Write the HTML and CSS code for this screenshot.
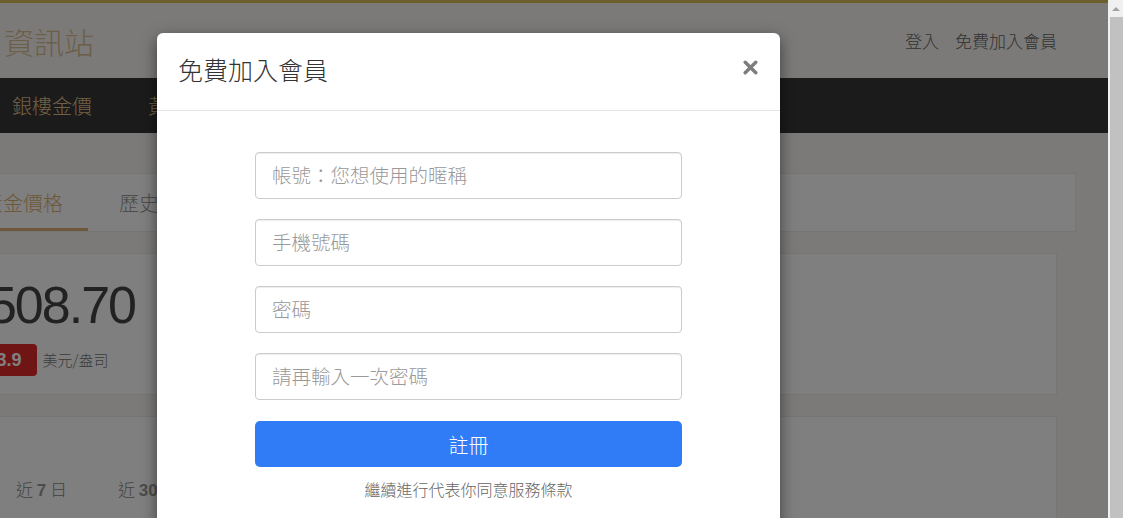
FILE: index.html
```html
<!DOCTYPE html>
<html lang="zh-Hant">
<head>
<meta charset="utf-8">
<title>資訊站</title>
<link rel="stylesheet" href="styles.css">
</head>
<body>
<div class="page">
  <div class="topbar"></div>
  <header class="header">
    <div class="logo">資訊站</div>
    <nav class="user-links">
      <a href="#">登入</a>
      <a href="#">免費加入會員</a>
    </nav>
  </header>
  <nav class="mainnav">
    <a href="#">銀樓金價</a>
    <a href="#">黃金存摺</a>
    <a href="#">國際金價</a>
    <a href="#">白銀價格</a>
    <a href="#">匯率查詢</a>
  </nav>
  <main class="main">
    <div class="tabs">
      <a class="tab active" href="#">黃金價格</a>
      <a class="tab" href="#">歷史走勢</a>
    </div>
    <section class="card price-card">
      <div class="price">1508.70</div>
      <div class="badge-row">
        <span class="badge">+13.9</span>
        <span class="unit">美元/盎司</span>
      </div>
    </section>
    <section class="card range-card">
      <div class="ranges">
        <span class="range">近 <b>7</b> 日</span>
        <span class="range">近 <b>30</b> 日</span>
        <span class="range">近 <b>90</b> 日</span>
      </div>
    </section>
  </main>

  <div class="backdrop"></div>

  <div class="modal">
    <div class="modal-header">
      <h4 class="modal-title">免費加入會員</h4>
      <button class="close" type="button" aria-label="關閉">
        <svg width="15" height="15" viewBox="0 0 15 15"><path d="M2.2 2.2 L12.8 12.8 M12.8 2.2 L2.2 12.8" stroke="#7d7d7d" stroke-width="3.4" stroke-linecap="round" fill="none"/></svg>
      </button>
    </div>
    <div class="modal-body">
      <form class="form">
        <input class="field" type="text" placeholder="帳號：您想使用的暱稱">
        <input class="field" type="text" placeholder="手機號碼">
        <input class="field" type="password" placeholder="密碼">
        <input class="field" type="password" placeholder="請再輸入一次密碼">
        <button class="submit" type="button">註冊</button>
      </form>
      <p class="terms">繼續進行代表你同意服務條款</p>
    </div>
  </div>
</div>
<div class="scrollbar">
  <div class="scroll-up"></div>
  <div class="scroll-thumb"></div>
</div>
</body>
</html>
```
FILE: styles.css
```css
html, body {
  margin: 0;
  height: 100%;
  overflow: hidden;
}
body {
  display: flex;
  font-family: "Noto Sans CJK TC", "Noto Sans", sans-serif;
  font-weight: 300;
  background: #f7f4f0;
}
a { text-decoration: none; color: inherit; }

.page {
  flex: 1;
  min-width: 0;
  position: relative;
  overflow: hidden;
  background: #f7f4f0;
}

.topbar {
  height: 3px;
  background: #d6be58;
}

.header {
  height: 75px;
  display: flex;
  align-items: center;
  justify-content: space-between;
  padding: 0 51px 0 4px;
  background: #f7f4f0;
}
.logo {
  font-size: 30px;
  line-height: 36px;
  color: #d8bd92;
  margin-top: 1px;
}
.user-links {
  display: flex;
  gap: 16px;
  font-size: 17px;
  line-height: 24px;
  color: #666;
  margin-top: 1px;
}

.mainnav {
  height: 55px;
  background: #363636;
  display: flex;
  align-items: center;
  padding-left: 12px;
  gap: 56px;
}
.mainnav a {
  font-size: 20px;
  line-height: 26px;
  color: #e2c18e;
}

.main {
  margin: 0 51px 0 -60px;
  padding-top: 40px;
}

.tabs {
  margin-right: -19px;
  height: 57px;
  border: 1px solid #eaeaea;
  background: #fff;
  display: flex;
  padding-left: 17px;
}
.tab {
  box-sizing: border-box;
  height: 57px;
  padding: 3px 25px 0;
  margin-right: 6px;
  display: flex;
  align-items: center;
  font-size: 20px;
  line-height: 26px;
  color: #999;
  border-bottom: 3px solid transparent;
}
.tab.active {
  color: #d8b070;
  border-bottom-color: #d8b070;
}

.card {
  background: #fff;
  border: 1px solid #eaeaea;
  margin-top: 21px;
}
.price-card {
  padding: 21px 0 18px 20px;
}
.price {
  font-family: "Liberation Sans", Arial, sans-serif;
  font-weight: normal;
  font-size: 52px;
  line-height: 60px;
  letter-spacing: -2px;
  color: #444;
}
.badge-row {
  display: flex;
  align-items: center;
  margin-top: 9px;
}
.badge {
  height: 32px;
  box-sizing: border-box;
  padding: 0 15px;
  display: flex;
  align-items: center;
  background: #e02b2b;
  color: #fff;
  border-radius: 4px;
  font-family: "Liberation Sans", Arial, sans-serif;
  font-weight: bold;
  font-size: 18px;
}
.unit {
  margin-left: 6px;
  font-size: 15px;
  line-height: 20px;
  color: #777;
}

.range-card {
  padding: 62px 0 40px 75px;
}
.ranges {
  display: flex;
  gap: 51px;
}
.range {
  font-size: 17px;
  line-height: 20px;
  color: #888;
}
.range b {
  font-family: "Liberation Sans", Arial, sans-serif;
  font-weight: bold;
  color: #999;
}

.backdrop {
  position: absolute;
  inset: 0;
  background: rgba(0, 0, 0, 0.5);
}

.modal {
  position: absolute;
  left: 157px;
  top: 33px;
  width: 623px;
  background: #fff;
  border-radius: 6px;
  box-shadow: 0 5px 15px rgba(0, 0, 0, 0.5);
}
.modal-header {
  display: flex;
  justify-content: space-between;
  align-items: center;
  padding: 21px 22px 26px 21px;
  border-bottom: 1px solid #e5e5e5;
}
.modal-title {
  margin: 0;
  font-size: 25px;
  line-height: 30px;
  font-weight: 300;
  color: #333;
}
.close {
  border: 0;
  background: none;
  padding: 0;
  width: 15px;
  height: 15px;
  margin-top: -3px;
  display: flex;
}

.modal-body {
  padding: 41px 0 30px;
}
.form {
  width: 427px;
  margin: 0 auto;
  display: flex;
  flex-direction: column;
  gap: 20px;
}
.field {
  box-sizing: border-box;
  height: 47px;
  padding: 0 16px 2px;
  border: 1px solid #ccc;
  border-radius: 4px;
  box-shadow: inset 0 1px 1px rgba(0, 0, 0, 0.075);
  font-family: "Noto Sans CJK TC", "Noto Sans", sans-serif;
  font-weight: 300;
  font-size: 19.5px;
  color: #555;
  outline: none;
}
.field::placeholder {
  color: #999;
}
.submit {
  margin-top: 1px;
  height: 46px;
  border: 0;
  border-radius: 5px;
  background: #2f7cf6;
  color: #fff;
  font-family: "Noto Sans CJK TC", "Noto Sans", sans-serif;
  font-weight: 300;
  font-size: 20px;
}
.terms {
  margin: 11px 0 0;
  text-align: center;
  font-size: 16px;
  line-height: 22px;
  color: #666;
}

.scrollbar {
  width: 15px;
  flex: none;
  background: #f0f0f0;
  display: flex;
  flex-direction: column;
}
.scroll-up {
  height: 17px;
  display: flex;
  justify-content: center;
  align-items: center;
}
.scroll-up::before {
  content: "";
  border-left: 4px solid transparent;
  border-right: 4px solid transparent;
  border-bottom: 4px solid #a3a3a3;
}
.scroll-thumb {
  flex: 1;
  margin-left: 2px;
  background: #c1c1c1;
}
```
